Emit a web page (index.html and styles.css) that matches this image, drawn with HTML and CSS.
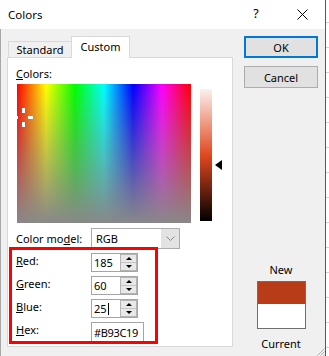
FILE: index.html
```html
<!DOCTYPE html>
<html>
<head>
<meta charset="utf-8">
<link rel="stylesheet" href="styles.css">
</head>
<body>
<div class="window">
  <div class="titlebar">
    <span class="title">Colors</span>
    <span class="cap-btn help">?</span>
    <span class="cap-btn"><svg width="11" height="11" viewBox="0 0 11 11"><path d="M0.5 0.5 L10.5 10.5 M10.5 0.5 L0.5 10.5" stroke="#000" stroke-width="1" fill="none"/></svg></span>
  </div>
  <div class="main">
    <div class="left">
      <div class="tabs">
        <div class="tab">Standard</div>
        <div class="tab active">Custom</div>
      </div>
      <div class="panel">
        <div class="label"><u>C</u>olors:</div>
        <div class="picker">
          <div class="spectrum">
            <span class="ch ch-t"></span>
            <span class="ch ch-b"></span>
            <span class="ch ch-l"></span>
            <span class="ch ch-r"></span>
          </div>
          <div class="lum"></div>
          <svg class="arrow" width="7" height="10" viewBox="0 0 7 10"><path d="M0 5 L7 0 L7 10 Z" fill="#000"/></svg>
        </div>
        <div class="row model">
          <span class="lbl">Color mo<u>d</u>el:</span>
          <div class="select">
            <span class="sel-text">RGB</span>
            <span class="sel-btn"><svg width="9" height="6" viewBox="0 0 9 6"><path d="M0.5 0.5 L4.5 4.5 L8.5 0.5" stroke="#8a8a8a" stroke-width="1" fill="none"/></svg></span>
          </div>
        </div>
        <div class="fields">
          <div class="row field">
            <span class="lbl"><u>R</u>ed:</span>
            <div class="input num"><span class="val">185</span><span class="spinner"><span class="sp up"><i></i></span><span class="sp down"><i></i></span></span></div>
          </div>
          <div class="row field">
            <span class="lbl"><u>G</u>reen:</span>
            <div class="input num"><span class="val">60</span><span class="spinner"><span class="sp up"><i></i></span><span class="sp down"><i></i></span></span></div>
          </div>
          <div class="row field">
            <span class="lbl"><u>B</u>lue:</span>
            <div class="input num"><span class="val">25<span class="caret"></span></span><span class="spinner"><span class="sp up"><i></i></span><span class="sp down"><i></i></span></span></div>
          </div>
          <div class="row field">
            <span class="lbl"><u>H</u>ex:</span>
            <div class="input hex"><span class="val hexval">#B93C19</span></div>
          </div>
        </div>
      </div>
    </div>
    <div class="right">
      <div class="btn ok">OK</div>
      <div class="btn">Cancel</div>
      <div class="cap new">New</div>
      <div class="swatch"><div class="sw-new"></div><div class="sw-cur"></div></div>
      <div class="cap current">Current</div>
    </div>
  </div>
  <div class="highlight"></div>
  <svg class="grip" width="9" height="9" viewBox="0 0 9 9"><path d="M8.5 1.5 L1.5 8.5 M8.5 4.5 L4.5 8.5 M8.5 7.5 L7.5 8.5" stroke="#b0b0b0" stroke-width="1" fill="none"/></svg>
</div>
</body>
</html>
```

FILE: styles.css
```css
html, body {
  margin: 0;
  padding: 0;
}
body {
  width: 329px;
  height: 356px;
  overflow: hidden;
  background: repeating-linear-gradient(to bottom, #fff 0 22px, #d4d4d4 22px 23px, #fff 23px 25px);
  font-family: "Noto Sans", "Open Sans", sans-serif;
  font-size: 11px;
  color: #000;
}
.window {
  position: relative;
  width: 326px;
  height: 356px;
  box-sizing: border-box;
  background: #f0f0f0;
  border-right: 1px solid #5a5a5a;
  box-shadow: inset 1px 0 0 #a8a8a8;
}
.titlebar {
  display: flex;
  align-items: center;
  height: 29px;
  background: #fff;
  padding-left: 8px;
}
.title {
  flex: 1;
  font-size: 11.5px;
}
.cap-btn {
  width: 46px;
  height: 29px;
  display: flex;
  align-items: center;
  justify-content: center;
  font-size: 12.5px;
}
.help {
  padding-bottom: 2px;
  box-sizing: border-box;
}
.main {
  display: flex;
  padding-top: 7px;
  padding-left: 7px;
}
.left {
  width: 226px;
  display: flex;
  flex-direction: column;
}
.tabs {
  display: flex;
  align-items: flex-end;
  height: 21px;
  padding-left: 1px;
}
.tab {
  box-sizing: border-box;
  width: 63px;
  height: 16px;
  border: 1px solid #d9d9d9;
  border-bottom: none;
  border-right: none;
  display: flex;
  align-items: center;
  justify-content: center;
  line-height: 14px;
}
.tab.active {
  position: relative;
  z-index: 1;
  width: 59px;
  height: 22px;
  margin-bottom: -1px;
  border-right: 1px solid #d9d9d9;
  background: #fff;
  padding-bottom: 2px;
}
.panel {
  box-sizing: border-box;
  width: 226px;
  height: 290px;
  border: 1px solid #d9d9d9;
  background: #fff;
  padding: 8px 0 0 8px;
}
.label {
  line-height: 15px;
}
.picker {
  display: flex;
  align-items: flex-start;
  margin-top: 3px;
  height: 139px;
}
.spectrum {
  position: relative;
  overflow: hidden;
  width: 174px;
  height: 139px;
  margin-left: 1px;
  background:
    linear-gradient(to bottom, rgba(136,136,136,0), rgba(136,136,136,1)),
    linear-gradient(to right, #f00, #ff0 16.7%, #0f0 33.3%, #0ff 50%, #00f 66.7%, #f0f 83.3%, #f00);
}
.ch {
  position: absolute;
  background: #fff;
}
.ch-t { left: 5px; top: 24px; width: 3px; height: 5px; }
.ch-b { left: 5px; top: 38px; width: 3px; height: 5px; }
.ch-l { left: -4px; top: 32px; width: 5px; height: 3px; }
.ch-r { left: 11px; top: 32px; width: 5px; height: 3px; }
.lum {
  width: 12px;
  height: 132px;
  margin-left: 9px;
  margin-top: 5px;
  background: linear-gradient(to bottom, hsl(13,70%,96%) 0%, hsl(13,76%,50%) 50%, #000 100%);
}
.arrow {
  display: block;
  margin-left: 3px;
  margin-top: 76px;
}
.row {
  display: flex;
  align-items: center;
}
.lbl {
  width: 75px;
  flex: none;
  line-height: 15px;
}
.model {
  margin-top: 5px;
  height: 21px;
}
.select {
  box-sizing: border-box;
  width: 89px;
  height: 21px;
  border: 1px solid #acacac;
  display: flex;
  align-items: center;
}
.sel-text {
  flex: 1;
  padding-left: 4px;
}
.sel-btn {
  width: 18px;
  height: 19px;
  background: #e3e3e3;
  display: flex;
  align-items: center;
  justify-content: center;
}
.fields {
  margin-top: 4px;
  display: flex;
  flex-direction: column;
  gap: 4px;
}
.field {
  align-items: flex-start;
}
.input {
  box-sizing: border-box;
  border: 1px solid #a5a5a5;
  height: 19px;
  display: flex;
  align-items: center;
}
.input.num {
  width: 47px;
}
.input.hex {
  width: 53px;
  height: 20px;
}
.val {
  flex: 1;
  padding-left: 2px;
  display: flex;
  align-items: center;
  line-height: 15px;
}
.hexval {
  letter-spacing: -0.35px;
  padding-left: 2px;
}
.caret {
  display: inline-block;
  width: 1px;
  height: 12px;
  background: #000;
  margin-left: 1px;
}
.spinner {
  box-sizing: border-box;
  width: 17px;
  height: 17px;
  border: 1px solid #b4b4b4;
  display: flex;
  flex-direction: column;
  background: #e8e8e8;
}
.sp {
  flex: 1;
  display: flex;
  align-items: center;
  justify-content: center;
}
.sp.up {
  border-bottom: 1px solid #c4c4c4;
}
.sp i {
  width: 0;
  height: 0;
  border-left: 3px solid transparent;
  border-right: 3px solid transparent;
}
.sp.up i {
  border-bottom: 3px solid #000;
}
.sp.down i {
  border-top: 3px solid #000;
}
.right {
  width: 74px;
  margin-left: 11px;
  display: flex;
  flex-direction: column;
  align-items: center;
}
.btn {
  box-sizing: border-box;
  width: 74px;
  height: 22px;
  border: 1px solid #adadad;
  background: #e1e1e1;
  display: flex;
  align-items: center;
  justify-content: center;
}
.btn.ok {
  border: 2px solid #0078d7;
}
.btn + .btn {
  margin-top: 8px;
}
.cap {
  line-height: 15px;
}
.new {
  margin-top: 174px;
}
.swatch {
  box-sizing: border-box;
  width: 49px;
  height: 48px;
  margin-top: 4px;
  border: 1px solid #6e6e6e;
  display: flex;
  flex-direction: column;
}
.sw-new {
  height: 22px;
  background: #b93c19;
}
.sw-cur {
  flex: 1;
  background: #fff;
}
.current {
  margin-top: 7px;
}
.highlight {
  position: absolute;
  left: 9px;
  top: 247px;
  width: 149px;
  height: 97px;
  box-sizing: border-box;
  border: 3px solid #f00;
}
.grip {
  position: absolute;
  right: 0;
  bottom: 0;
}
```
